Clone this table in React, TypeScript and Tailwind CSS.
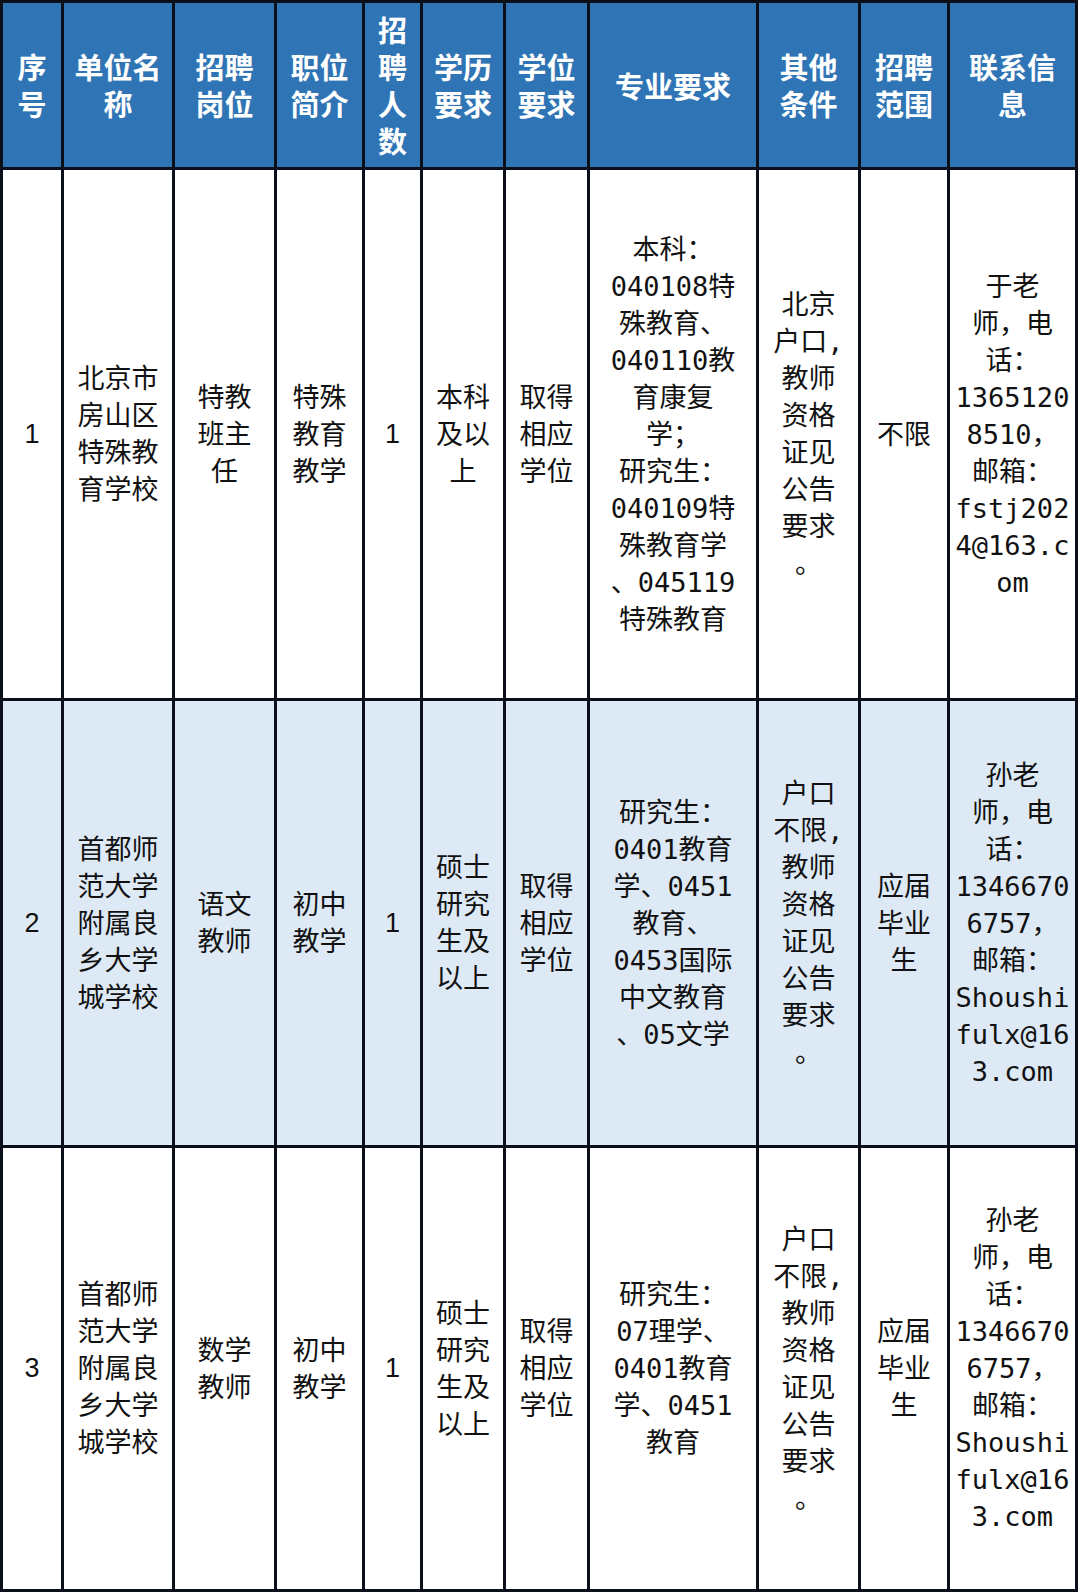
type Row = {
  bg: string;
  cells: string[][];
};

const headers: string[][] = [
  ['序', '号'],
  ['单位名', '称'],
  ['招聘', '岗位'],
  ['职位', '简介'],
  ['招', '聘', '人', '数'],
  ['学历', '要求'],
  ['学位', '要求'],
  ['专业要求'],
  ['其他', '条件'],
  ['招聘', '范围'],
  ['联系信', '息'],
];

const other = ['户口', '不限,', '教师', '资格', '证见', '公告', '要求', '。'];
const sunContact = ['孙老', '师，电', '话：', '1346670', '6757，', '邮箱：', 'Shoushi', 'fulx@16', '3.com'];
const fsdz = ['首都师', '范大学', '附属良', '乡大学', '城学校'];

const rows: Row[] = [
  {
    bg: 'bg-white',
    cells: [
      ['1'],
      ['北京市', '房山区', '特殊教', '育学校'],
      ['特教', '班主', '任'],
      ['特殊', '教育', '教学'],
      ['1'],
      ['本科', '及以', '上'],
      ['取得', '相应', '学位'],
      ['本科：', '040108特', '殊教育、', '040110教', '育康复', '学；', '研究生：', '040109特', '殊教育学', '、045119', '特殊教育'],
      ['北京', '户口,', '教师', '资格', '证见', '公告', '要求', '。'],
      ['不限'],
      ['于老', '师，电', '话：', '1365120', '8510，', '邮箱：', 'fstj202', '4@163.c', 'om'],
    ],
  },
  {
    bg: 'bg-[#dde9f5]',
    cells: [
      ['2'],
      fsdz,
      ['语文', '教师'],
      ['初中', '教学'],
      ['1'],
      ['硕士', '研究', '生及', '以上'],
      ['取得', '相应', '学位'],
      ['研究生：', '0401教育', '学、0451', '教育、', '0453国际', '中文教育', '、05文学'],
      other,
      ['应届', '毕业', '生'],
      sunContact,
    ],
  },
  {
    bg: 'bg-white',
    cells: [
      ['3'],
      fsdz,
      ['数学', '教师'],
      ['初中', '教学'],
      ['1'],
      ['硕士', '研究', '生及', '以上'],
      ['取得', '相应', '学位'],
      ['研究生：', '07理学、', '0401教育', '学、0451', '教育'],
      other,
      ['应届', '毕业', '生'],
      sunContact,
    ],
  },
];

function Lines({ lines }: { lines: string[] }) {
  return (
    <div className="flex flex-col items-center">
      {lines.map((l, i) => (
        <span key={i} className="whitespace-nowrap">
          {l}
        </span>
      ))}
    </div>
  );
}

export default function App() {
  return (
    <div className="min-h-screen bg-white">
      <div className="grid w-fit grid-cols-[58px_108px_99px_85px_55px_80px_81px_166px_99px_86px_125px] grid-rows-[164px_528px_444px_441px] gap-[3px] bg-[#0b0f1a] p-[3px]">
        {headers.map((h, i) => (
          <div
            key={'h' + i}
            className="flex items-center justify-center bg-[#2f75b5] text-[29px] leading-[37px] font-bold text-white font-['Noto_Sans_CJK_SC',sans-serif]"
          >
            <Lines lines={h} />
          </div>
        ))}
        {rows.map((r, ri) =>
          r.cells.map((c, ci) => (
            <div
              key={ri + '-' + ci}
              className={
                r.bg +
                ' flex items-center justify-center text-[27px] leading-[37px] text-[#111] ' +
                (ci === 0 || ci === 4
                  ? "font-['Liberation_Sans','Noto_Sans_CJK_SC',sans-serif]"
                  : "font-['DejaVu_Sans_Mono','Noto_Sans_CJK_SC',sans-serif]")
              }
            >
              <Lines lines={c} />
            </div>
          ))
        )}
      </div>
    </div>
  );
}
